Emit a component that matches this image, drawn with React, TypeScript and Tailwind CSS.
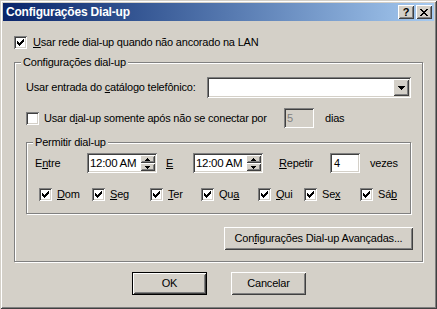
import React from 'react';

const sunken =
  'shadow-[inset_1px_1px_0_#808080,inset_-1px_-1px_0_#ffffff,inset_2px_2px_0_#404040,inset_-2px_-2px_0_#d4d0c8]';
const raised =
  'shadow-[inset_1px_1px_0_#ffffff,inset_-1px_-1px_0_#404040,inset_2px_2px_0_#d4d0c8,inset_-2px_-2px_0_#808080]';
const etched = 'border border-[#808080] shadow-[1px_1px_0_#ffffff,inset_1px_1px_0_#ffffff]';

function CheckMark() {
  const px: [number, number][] = [
    [6, 0], [5, 1], [6, 1], [0, 2], [4, 2], [5, 2], [6, 2],
    [0, 3], [1, 3], [3, 3], [4, 3], [5, 3],
    [0, 4], [1, 4], [2, 4], [3, 4], [4, 4],
    [1, 5], [2, 5], [3, 5], [2, 6],
  ];
  return (
    <svg width="7" height="7" viewBox="0 0 7 7" shapeRendering="crispEdges">
      {px.map(([x, y]) => (
        <rect key={`${x}-${y}`} x={x} y={y} width="1" height="1" fill="#000" />
      ))}
    </svg>
  );
}

function Checkbox({ checked }: { checked?: boolean }) {
  return (
    <div className={`w-[13px] h-[13px] shrink-0 bg-white flex items-center justify-center ${sunken}`}>
      {checked && <CheckMark />}
    </div>
  );
}

function GroupLabel({ children }: { children: React.ReactNode }) {
  return (
    <span className="-mt-[7px] ml-[6px] px-[2px] self-start bg-[#d4d0c8] h-[13px]">{children}</span>
  );
}

function Arrow({ up, w = 7 }: { up?: boolean; w?: number }) {
  const h = Math.ceil(w / 2);
  return (
    <svg width={w} height={h} viewBox={`0 0 ${w} ${h}`} shapeRendering="crispEdges">
      <polygon
        points={up ? `0,${h} ${w},${h} ${w / 2},0` : `0,0 ${w},0 ${w / 2},${h}`}
        fill="#000"
      />
    </svg>
  );
}

function TimeField() {
  return (
    <div className={`w-[70px] h-[20px] shrink-0 bg-white flex items-center pl-[3px] pr-[2px] ${sunken}`}>
      <span className="text-[11.5px] tracking-[-0.3px]">12:00 AM</span>
      <div className="ml-auto flex flex-col w-[15px] h-[16px]">
        <div className={`h-[8px] bg-[#d4d0c8] flex items-center justify-center ${raised}`}>
          <Arrow up w={5} />
        </div>
        <div className={`h-[8px] bg-[#d4d0c8] flex items-center justify-center ${raised}`}>
          <Arrow w={5} />
        </div>
      </div>
    </div>
  );
}

function Day({ label, width }: { label: React.ReactNode; width: number }) {
  return (
    <div className="flex items-center shrink-0" style={{ width }}>
      <Checkbox checked />
      <span className="ml-[5px]">{label}</span>
    </div>
  );
}

function Button({ children, width, isDefault }: { children: React.ReactNode; width: number; isDefault?: boolean }) {
  return (
    <div
      className={`h-[23px] shrink-0 flex items-center justify-center bg-[#d4d0c8] ${
        isDefault ? 'border border-black' : ''
      }`}
      style={{ width }}
    >
      <div className={`w-full h-full flex items-center justify-center ${raised}`}>{children}</div>
    </div>
  );
}

export default function App() {
  return (
    <div
      className="w-[437px] h-[309px] bg-[#d4d0c8] p-[3px] flex flex-col text-black text-[11px] leading-[13px] tracking-[-0.2px] font-['Liberation_Sans',Arial,sans-serif] shadow-[inset_1px_1px_0_#d4d0c8,inset_-1px_-1px_0_#404040,inset_2px_2px_0_#ffffff,inset_-2px_-2px_0_#808080]"
    >
      <div className="h-[18px] shrink-0 flex items-center bg-gradient-to-r from-[#0a246a] to-[#a6caf0] pl-[3px] pr-[2px]">
        <span className="text-white font-bold text-[12px] tracking-[-0.2px]">Configurações Dial-up</span>
        <div className="ml-auto flex gap-[2px] tracking-normal">
          <div className={`w-[16px] h-[14px] bg-[#d4d0c8] flex items-center justify-center font-bold text-[11px] ${raised}`}>
            ?
          </div>
          <div className={`w-[16px] h-[14px] bg-[#d4d0c8] flex items-center justify-center ${raised}`}>
            <svg width="8" height="7" viewBox="0 0 8 7" shapeRendering="crispEdges">
              <path d="M0 0h2v1h-2zM6 0h2v1h-2zM1 1h2v1h-2zM5 1h2v1h-2zM2 2h4v1h-4zM3 3h2v1h-2zM2 4h4v1h-4zM1 5h2v1h-2zM5 5h2v1h-2zM0 6h2v1h-2zM6 6h2v1h-2z" fill="#000" />
            </svg>
          </div>
        </div>
      </div>

      <div className="flex flex-col pl-[11px]">
        <div className="mt-[15px] h-[13px] flex items-center">
          <Checkbox checked />
          <span className="ml-[6px]">
            <u>U</u>sar rede dial-up quando não ancorado na LAN
          </span>
        </div>

        <div className={`mt-[13px] w-[409px] h-[200px] flex flex-col ${etched}`}>
          <GroupLabel>Configurações dial-up</GroupLabel>

          <div className="mt-[8px] pl-[11px] flex items-center h-[21px]">
            <span className="w-[181px] shrink-0">
              Usar entrada do <u>c</u>atálogo telefônico:
            </span>
            <div className={`w-[204px] h-[21px] bg-white flex items-center justify-end p-[2px] ${sunken}`}>
              <div className={`w-[16px] h-[17px] bg-[#d4d0c8] flex items-center justify-center ${raised}`}>
                <Arrow />
              </div>
            </div>
          </div>

          <div className="mt-[10px] pl-[11px] flex items-center h-[20px]">
            <div className="w-[258px] shrink-0 flex items-center">
              <Checkbox />
              <span className="ml-[5px]">
                Usar d<u>i</u>al-up somente após não se conectar por
              </span>
            </div>
            <div className={`w-[30px] h-[20px] bg-[#d4d0c8] flex items-center pl-[3px] text-[#808080] ${sunken}`}>
              5
            </div>
            <span className="ml-[11px]">dias</span>
          </div>

          <div className={`mt-[14px] ml-[11px] w-[385px] h-[72px] flex flex-col ${etched}`}>
            <GroupLabel>Permitir dial-up</GroupLabel>

            <div className="mt-[4px] pl-[8px] flex items-center h-[20px]">
              <span className="w-[52px] shrink-0">
                E<u>n</u>tre
              </span>
              <TimeField />
              <span className="w-[36px] shrink-0 pl-[9px]">
                <u>E</u>
              </span>
              <TimeField />
              <span className="w-[67px] shrink-0 pl-[16px]">
                <u>R</u>epetir
              </span>
              <div className={`w-[30px] h-[20px] bg-white flex items-center pl-[4px] ${sunken}`}>4</div>
              <span className="ml-[10px]">vezes</span>
            </div>

            <div className="mt-[15px] pl-[12px] flex items-center h-[13px]">
              <Day width={53} label={<><u>D</u>om</>} />
              <Day width={58} label={<><u>S</u>eg</>} />
              <Day width={51} label={<><u>T</u>er</>} />
              <Day width={57} label={<>Qu<u>a</u></>} />
              <Day width={46} label={<><u>Q</u>ui</>} />
              <Day width={56} label={<>Se<u>x</u></>} />
              <Day width={40} label={<>Sá<u>b</u></>} />
            </div>
          </div>

          <div className="mt-[13px] self-end mr-[9px]">
            <Button width={189}>
              <span>
                Con<u>f</u>igurações Dial-up Avançadas...
              </span>
            </Button>
          </div>
        </div>
      </div>

      <div className="mt-[10px] flex justify-center gap-[24px] pl-[1px]">
        <Button width={75} isDefault>
          OK
        </Button>
        <Button width={75}>Cancelar</Button>
      </div>
    </div>
  );
}
